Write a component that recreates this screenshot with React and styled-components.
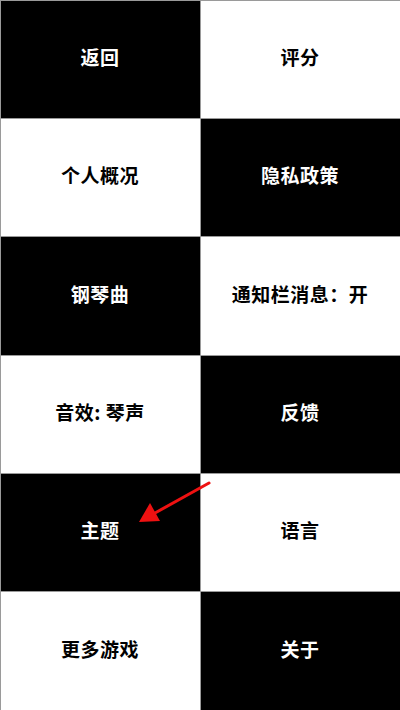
import React from 'react'
import styled, { createGlobalStyle } from 'styled-components'

const items = [
  '返回', '评分',
  '个人概况', '隐私政策',
  '钢琴曲', '通知栏消息：开',
  '音效: 琴声', '反馈',
  '主题', '语言',
  '更多游戏', '关于',
]

const GlobalStyle = createGlobalStyle`
  html, body {
    margin: 0;
    padding: 0;
    background: #fff;
  }
  body {
    font-family: "Noto Sans CJK SC", "Noto Sans", sans-serif;
  }
`

const Wrapper = styled.div`
  position: relative;
  width: 400px;
  height: 710px;
  display: grid;
  grid-template-columns: 1fr 1fr;
  grid-template-rows: repeat(6, 1fr);
  overflow: hidden;
`

const Cell = styled.button`
  display: flex;
  align-items: center;
  justify-content: center;
  padding: 0 0 5px;
  border: 1px solid #9a9a9a;
  margin: -0.5px;
  background: ${(p) => (p.$dark ? '#000' : '#fff')};
  color: ${(p) => (p.$dark ? '#fff' : '#000')};
  font-family: inherit;
  font-size: 19px;
  font-weight: 700;
  letter-spacing: 0.5px;
  cursor: pointer;
`

const Arrow = styled.svg`
  position: absolute;
  left: 0;
  top: 0;
  pointer-events: none;
`

const Settings = () => {
  return (
    <Wrapper>
      {items.map((label, i) => {
        const row = Math.floor(i / 2)
        const col = i % 2
        return (
          <Cell key={label} $dark={(row + col) % 2 === 0}>
            {label}
          </Cell>
        )
      })}
      <Arrow width="400" height="710" viewBox="0 0 400 710">
        <line x1="209" y1="483" x2="155" y2="513" stroke="#ee1111" strokeWidth="3" strokeLinecap="round" />
        <polygon points="139,522 150,503 160,521" fill="#ee1111" />
      </Arrow>
    </Wrapper>
  )
}

const App = () => (
  <>
    <GlobalStyle />
    <Settings />
  </>
)

export default App
